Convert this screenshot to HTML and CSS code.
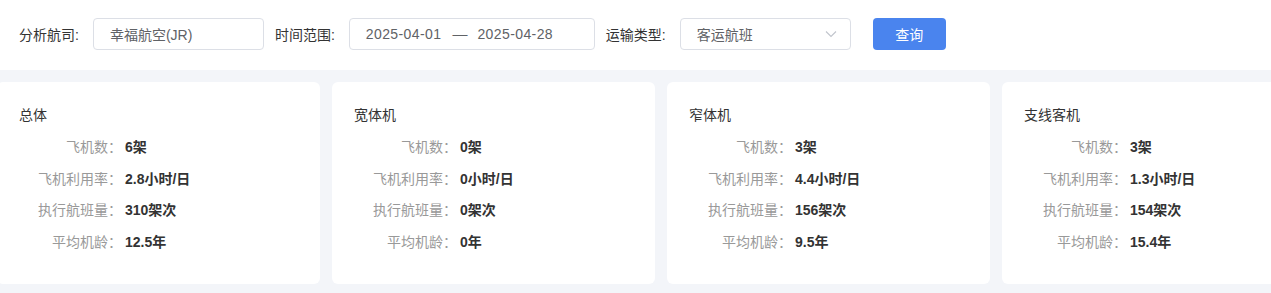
FILE: index.html
```html
<!DOCTYPE html>
<html lang="zh-CN">
<head>
  <meta charset="UTF-8">
  <meta name="viewport" content="width=device-width, initial-scale=1.0">
  <title>机队概况</title>
  <link rel="stylesheet" href="styles.css">
</head>
<body>
  <div class="filter-bar">
    <label class="filter-label">分析航司:</label>
    <div class="field field-airline">幸福航空(JR)</div>
    <label class="filter-label">时间范围:</label>
    <div class="field field-date">
      <span class="date">2025-04-01</span>
      <span class="sep">—</span>
      <span class="date">2025-04-28</span>
    </div>
    <label class="filter-label">运输类型:</label>
    <div class="field field-select">
      <span>客运航班</span>
      <svg class="arrow" width="12" height="8" viewBox="0 0 12 8"><path d="M1 1.5 L6 6.5 L11 1.5" fill="none" stroke="#c0c4cc" stroke-width="1.1"/></svg>
    </div>
    <button class="btn-query">查询</button>
  </div>

  <div class="content">
    <div class="cards">
      <div class="card">
        <h3>总体</h3>
        <div class="row"><span class="k">飞机数：</span><span class="v">6架</span></div>
        <div class="row"><span class="k">飞机利用率：</span><span class="v">2.8小时/日</span></div>
        <div class="row"><span class="k">执行航班量：</span><span class="v">310架次</span></div>
        <div class="row"><span class="k">平均机龄：</span><span class="v">12.5年</span></div>
      </div>
      <div class="card">
        <h3>宽体机</h3>
        <div class="row"><span class="k">飞机数：</span><span class="v">0架</span></div>
        <div class="row"><span class="k">飞机利用率：</span><span class="v">0小时/日</span></div>
        <div class="row"><span class="k">执行航班量：</span><span class="v">0架次</span></div>
        <div class="row"><span class="k">平均机龄：</span><span class="v">0年</span></div>
      </div>
      <div class="card">
        <h3>窄体机</h3>
        <div class="row"><span class="k">飞机数：</span><span class="v">3架</span></div>
        <div class="row"><span class="k">飞机利用率：</span><span class="v">4.4小时/日</span></div>
        <div class="row"><span class="k">执行航班量：</span><span class="v">156架次</span></div>
        <div class="row"><span class="k">平均机龄：</span><span class="v">9.5年</span></div>
      </div>
      <div class="card">
        <h3>支线客机</h3>
        <div class="row"><span class="k">飞机数：</span><span class="v">3架</span></div>
        <div class="row"><span class="k">飞机利用率：</span><span class="v">1.3小时/日</span></div>
        <div class="row"><span class="k">执行航班量：</span><span class="v">154架次</span></div>
        <div class="row"><span class="k">平均机龄：</span><span class="v">15.4年</span></div>
      </div>
    </div>
  </div>
</body>
</html>
```

FILE: styles.css
```css
* { margin: 0; padding: 0; box-sizing: border-box; }
body { font-family: "Liberation Sans", "Noto Sans CJK SC", sans-serif; font-size: 14px; color: #333; background: #f3f5f9; overflow: hidden; }

.filter-bar { height: 70px; background: #fff; display: flex; align-items: center; padding: 0 19px 3px; }
.filter-label { color: #333; margin-right: 14px; white-space: nowrap; }
.field { height: 32px; border: 1px solid #dcdfe6; border-radius: 4px; display: flex; align-items: center; padding: 0 16px; color: #606266; margin-right: 11px; }
.field-airline { width: 171px; }
.field-date { width: 246px; }
.field-date .date { letter-spacing: 0.4px; }
.field-date .sep { font-size: 15px; margin: 0 10px 0 11px; }
.field-select { width: 171px; justify-content: space-between; }
.field-select .arrow { margin-right: -3px; }
.btn-query { margin-left: 11px; width: 73px; height: 32px; border: none; border-radius: 4px; background: #4a84ee; color: #fff; font-family: inherit; font-size: 14px; cursor: pointer; }

.content { padding: 12px 0 0; }
.cards { display: flex; gap: 12px; margin-left: -3px; }
.card { flex: 0 0 323px; height: 202px; background: #fff; border-radius: 6px; padding: 25px 22px 0; }
.card h3 { font-size: 14px; font-weight: normal; color: #333; line-height: 16px; margin-bottom: 7px; }
.row { display: flex; align-items: center; height: 31.7px; }
.row .k { width: 103px; text-align: right; color: #999; }
.row .v { margin-left: 3px; font-weight: bold; color: #333; }
```
